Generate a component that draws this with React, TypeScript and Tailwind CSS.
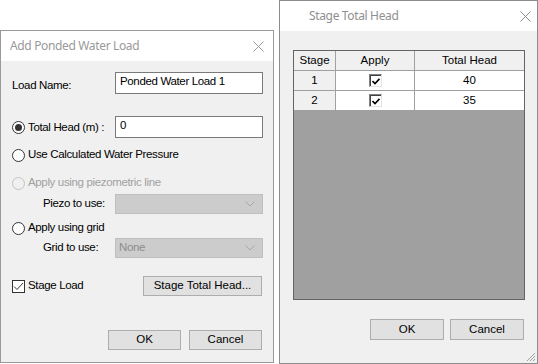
import React from "react";

const F = "font-['Liberation_Sans',Arial,sans-serif]";
const TF = "font-['Noto_Sans','Open_Sans',sans-serif]";

function Radio({ checked, disabled }: { checked?: boolean; disabled?: boolean }) {
  return (
    <span
      className={`shrink-0 w-[13px] h-[13px] rounded-full border flex items-center justify-center ${
        disabled ? "border-[#c4c4c4] bg-[#f0f0f0]" : "border-[#333333] bg-white"
      }`}
    >
      {checked && <span className="w-[7px] h-[7px] rounded-full bg-[#333333]" />}
    </span>
  );
}

function CloseX({ color }: { color: string }) {
  return (
    <svg width="11" height="11" viewBox="0 0 11 11" className="shrink-0">
      <path d="M0.5 0.5 L10.5 10.5 M10.5 0.5 L0.5 10.5" stroke={color} strokeWidth="1" fill="none" />
    </svg>
  );
}

function Chevron() {
  return (
    <svg width="10" height="6" viewBox="0 0 10 6">
      <path d="M0.5 0.5 L5 5 L9.5 0.5" stroke="#a8a8a8" strokeWidth="1" fill="none" />
    </svg>
  );
}

function DisabledSelect({ text }: { text?: string }) {
  return (
    <div className="ml-auto w-[148px] h-[20px] border border-[#bfbfbf] bg-[#cccccc] flex items-center pl-[3px] pr-[7px]">
      <span className="text-[#8d8d8d] flex-1">{text}</span>
      <Chevron />
    </div>
  );
}

function Btn({ children, w }: { children: React.ReactNode; w: string }) {
  return (
    <div className={`${w} h-[20px] border border-[#adadad] bg-[#e1e1e1] flex items-center justify-center text-black tracking-normal`}>
      {children}
    </div>
  );
}

function GridCheck() {
  return (
    <div className="w-[13px] h-[13px] border-t border-l border-t-[#808080] border-l-[#808080] border-r border-b border-r-[#e3e3e3] border-b-[#e3e3e3] bg-white">
      <div className="w-full h-full border-t border-l border-t-[#404040] border-l-[#404040] flex items-center justify-center">
        <svg width="8" height="7" viewBox="0 0 8 7">
          <path d="M0.5 3 L3 5.5 L7.5 0.8" stroke="#000" strokeWidth="1.6" fill="none" />
        </svg>
      </div>
    </div>
  );
}

export default function App() {
  return (
    <div className={`relative w-[538px] h-[364px] bg-white overflow-hidden ${F} text-[11.5px] text-black`}>
      {/* Left dialog */}
      <div className="absolute left-0 top-[30px] w-[274px] h-[333px] border border-[#9a9a9a] bg-[#f0f0f0] flex flex-col">
        <div className="h-[30px] bg-white flex items-center pl-[9px] pr-[9px]">
          <span className={`${TF} text-[12px] tracking-[-0.35px] text-[#999999] flex-1`}>Add Ponded Water Load</span>
          <CloseX color="#9a9a9a" />
        </div>
        <div className="flex flex-col pl-[11px] pr-[10px] tracking-[-0.35px]">
          <div className="mt-[11px] h-[22px] flex items-center">
            <span className="w-[103px] pt-[6px]">Load Name:</span>
            <div className="w-[148px] h-[22px] border border-[#7a7a7a] bg-white flex items-center pl-[4px] pb-[3px]">
              Ponded Water Load 1
            </div>
          </div>
          <div className="mt-[22px] h-[22px] flex items-center">
            <Radio checked />
            <span className="ml-[3px] pt-[1px]">Total Head (m) :</span>
            <div className="ml-auto w-[148px] h-[22px] border border-[#7a7a7a] bg-white flex items-center pl-[4px] pb-[3px]">
              0
            </div>
          </div>
          <div className="mt-[7px] h-[20px] flex items-center">
            <Radio />
            <span className="ml-[3px]">Use Calculated Water Pressure</span>
          </div>
          <div className="mt-[8px] h-[20px] flex items-center">
            <Radio disabled />
            <span className="ml-[3px] text-[#a0a0a0]">Apply using piezometric line</span>
          </div>
          <div className="mt-[1px] h-[20px] flex items-center">
            <span className="pl-[31px]">Piezo to use:</span>
            <DisabledSelect />
          </div>
          <div className="mt-[4px] h-[20px] flex items-center">
            <Radio />
            <span className="ml-[3px]">Apply using grid</span>
          </div>
          <div className="h-[20px] flex items-center">
            <span className="pl-[31px]">Grid to use:</span>
            <DisabledSelect text="None" />
          </div>
          <div className="mt-[18px] h-[20px] flex items-center">
            <span className="w-[13px] h-[13px] border border-[#333333] bg-white flex items-center justify-center">
              <svg width="11" height="9" viewBox="0 0 11 9">
                <path d="M1 4.5 L4 7.5 L10 1" stroke="#333" strokeWidth="1" fill="none" />
              </svg>
            </span>
            <span className="ml-[3px]">Stage Load</span>
            <div className="ml-auto mr-[1px]">
              <Btn w="w-[119px]">Stage Total Head...</Btn>
            </div>
          </div>
          <div className="mt-[34px] flex justify-end gap-[8px] mr-[1px]">
            <Btn w="w-[73px]">OK</Btn>
            <Btn w="w-[73px]">Cancel</Btn>
          </div>
        </div>
      </div>

      {/* Right dialog */}
      <div className="absolute left-[279px] top-0 w-[259px] h-[364px] border border-[#8c8c8c] bg-[#f0f0f0] flex flex-col">
        <div className="h-[30px] bg-white flex items-center pl-[29px] pr-[6px]">
          <span className={`${TF} text-[12px] tracking-[-0.35px] text-[#8f8f8f] flex-1`}>Stage Total Head</span>
          <CloseX color="#8a8a8a" />
        </div>
        <div className="flex flex-col pl-[13px]">
          <div className="mt-[19px] w-[232px] h-[250px] border border-[#646464] bg-[#a0a0a0] flex flex-col">
            <div className="h-[20px] flex border-b border-[#a0a0a0] bg-[#f0f0f0]">
              <div className="w-[42px] border-r border-[#a0a0a0] flex items-center justify-center">Stage</div>
              <div className="w-[79px] border-r border-[#a0a0a0] flex items-center justify-center">Apply</div>
              <div className="flex-1 flex items-center justify-center">Total Head</div>
            </div>
            {[
              ["1", "40"],
              ["2", "35"],
            ].map(([s, v]) => (
              <div key={s} className="h-[20px] flex border-b border-[#a0a0a0] bg-white">
                <div className="w-[42px] border-r border-[#a0a0a0] bg-[#f0f0f0] flex items-center justify-center">{s}</div>
                <div className="w-[79px] border-r border-[#a0a0a0] flex items-center justify-center">
                  <GridCheck />
                </div>
                <div className="flex-1 flex items-center justify-center">{v}</div>
              </div>
            ))}
          </div>
          <div className="mt-[19px] w-[232px] flex justify-end gap-[6px] pr-[1px]">
            <Btn w="w-[74px] h-[21px]">OK</Btn>
            <Btn w="w-[74px] h-[21px]">Cancel</Btn>
          </div>
        </div>
        <svg className="absolute right-[1px] bottom-[1px]" width="12" height="12" viewBox="0 0 12 12">
          <path d="M11 3 L3 11 M11 6 L6 11 M11 9 L9 11" stroke="#a0a0a0" strokeWidth="1" />
        </svg>
      </div>
    </div>
  );
}
